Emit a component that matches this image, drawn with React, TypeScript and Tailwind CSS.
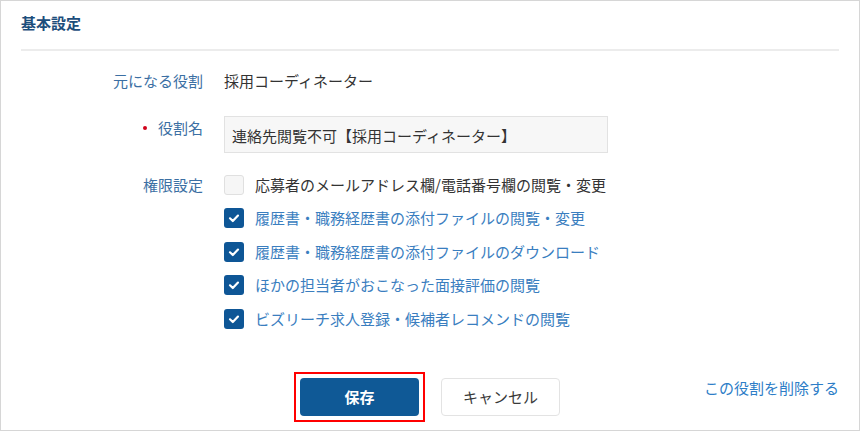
import React from "react";

const items: { label: string; checked: boolean }[] = [
  { label: "応募者のメールアドレス欄/電話番号欄の閲覧・変更", checked: false },
  { label: "履歴書・職務経歴書の添付ファイルの閲覧・変更", checked: true },
  { label: "履歴書・職務経歴書の添付ファイルのダウンロード", checked: true },
  { label: "ほかの担当者がおこなった面接評価の閲覧", checked: true },
  { label: "ビズリーチ求人登録・候補者レコメンドの閲覧", checked: true },
];

function Check({ checked }: { checked: boolean }) {
  if (!checked) {
    return (
      <span className="w-[20px] h-[20px] shrink-0 rounded-[3px] border border-[#e0e0e0] bg-[#f6f6f6]" />
    );
  }
  return (
    <span className="w-[20px] h-[20px] shrink-0 rounded-[3px] bg-[#0e5696] flex items-center justify-center">
      <svg width="20" height="20" viewBox="0 0 20 20" fill="none">
        <path
          d="M6 10.3 L8.8 13 L14 7.6"
          stroke="#ffffff"
          strokeWidth="2.2"
          strokeLinecap="round"
          strokeLinejoin="round"
        />
      </svg>
    </span>
  );
}

export default function App() {
  return (
    <div className="w-[860px] h-[431px] bg-white font-['Noto_Sans_CJK_JP','Noto_Sans',sans-serif] text-[15px] leading-[20px]">
      <div className="w-full h-full border border-[#d6d6d6] flex flex-col">
        <div className="h-[48px] pl-[20px] pt-[12px]">
          <h2 className="text-[15px] leading-[20px] font-bold text-[#1d4e7c]">基本設定</h2>
        </div>
        <div className="mx-[20px] h-[2px] bg-[#ececec]" />

        <div className="flex mt-[20px]">
          <div className="w-[202px] shrink-0 text-right text-[#3b6fa3]">元になる役割</div>
          <div className="ml-[21px] text-[#333333]">採用コーディネーター</div>
        </div>

        <div className="flex mt-[25px]">
          <div className="w-[202px] shrink-0 pt-[1.5px] flex justify-end items-start text-[#3b6fa3]">
            <span className="flex items-center">
              <span className="w-[4px] h-[4px] rounded-full bg-[#d0021b] mr-[11px]" />
              役割名
            </span>
          </div>
          <div className="ml-[21px] w-[384px] h-[37px] border border-[#e2e2e2] bg-[#f7f7f7] px-[7px] flex items-center pt-[2px] text-[#333333]">
            連絡先閲覧不可【採用コーディネーター】
          </div>
        </div>

        <div className="flex mt-[15px]">
          <div className="w-[202px] shrink-0 h-[33.5px] flex items-center justify-end text-[#3b6fa3]">
            権限設定
          </div>
          <div className="ml-[21px] flex flex-col">
            {items.map((it) => (
              <div key={it.label} className="h-[33.5px] flex items-center gap-[11px]">
                <Check checked={it.checked} />
                <span className={it.checked ? "text-[#3a7ebf]" : "text-[#333333]"}>{it.label}</span>
              </div>
            ))}
          </div>
        </div>

        <div className="mt-[42.5px] px-[20px] grid grid-cols-[1fr_auto_1fr] items-start">
          <div />
          <div className="flex gap-[22px]">
            <div className="relative">
              <button className="w-[119px] h-[38px] rounded-[4px] bg-[#0f5996] text-white font-bold flex items-center justify-center">
                保存
              </button>
              <div className="absolute -inset-[6px] border-2 border-[#ff0000] pointer-events-none" />
            </div>
            <button className="w-[119px] h-[38px] rounded-[4px] bg-white border border-[#e3e3e3] text-[#3a3a3a] flex items-center justify-center">
              キャンセル
            </button>
          </div>
          <div className="justify-self-end text-[#2d7dc7]">この役割を削除する</div>
        </div>
      </div>
    </div>
  );
}
